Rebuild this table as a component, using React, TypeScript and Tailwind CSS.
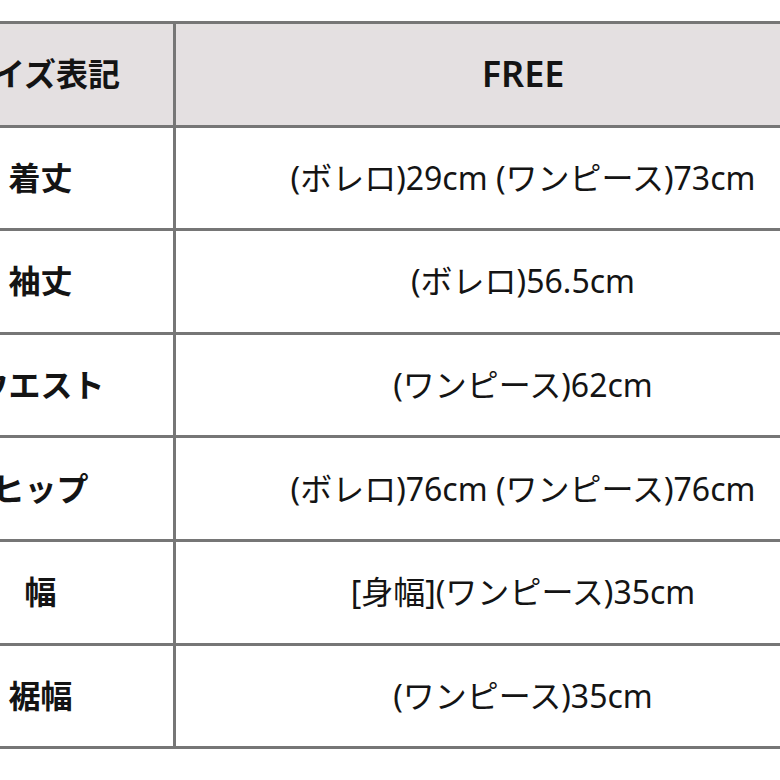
const rows: [string, string][] = [
  ["着丈", "(ボレロ)29cm (ワンピース)73cm"],
  ["袖丈", "(ボレロ)56.5cm"],
  ["ウエスト", "(ワンピース)62cm"],
  ["ヒップ", "(ボレロ)76cm (ワンピース)76cm"],
  ["幅", "[身幅](ワンピース)35cm"],
  ["裾幅", "(ワンピース)35cm"],
];

export default function App() {
  return (
    <div
      className="h-[780px] w-[780px] overflow-hidden bg-white pt-[21px] text-[#141414]"
      style={{ fontFamily: '"Noto Sans", "Noto Sans CJK JP", sans-serif' }}
    >
      <table className="ml-[-95px] w-[968px] border-collapse">
        <tbody>
          <tr className="h-[103.6px] bg-[#e4e0e1]">
            <th className="w-[268px] border-[3px] border-[#767676] text-center text-[32px] font-bold">
              サイズ表記
            </th>
            <th className="border-[3px] border-[#767676] text-center text-[36px] font-semibold">
              FREE
            </th>
          </tr>
          {rows.map(([label, value]) => (
            <tr key={label} className="h-[103.6px]">
              <td className="border-[3px] border-[#767676] text-center text-[32px] font-bold">
                {label}
              </td>
              <td className="border-[3px] border-[#767676] text-center text-[32px]">{value}</td>
            </tr>
          ))}
        </tbody>
      </table>
    </div>
  );
}
